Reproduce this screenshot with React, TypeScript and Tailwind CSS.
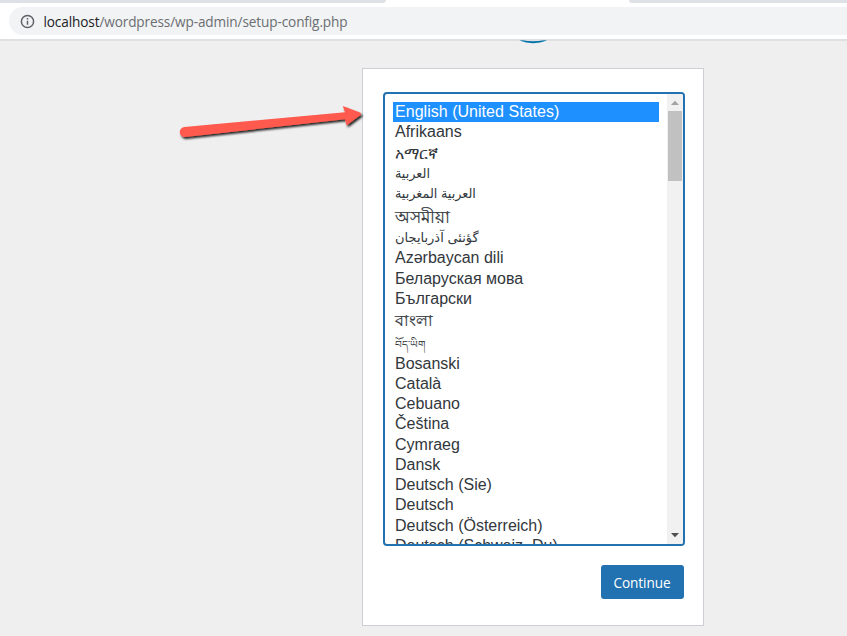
import React from 'react';

type Language = { name: string; row: string; text?: string };

const latin = 'text-[16px]';

const languages: Language[] = [
  { name: 'English (United States)', row: 'h-[20px] bg-[#1e90ff] text-white', text: 'text-[16px] tracking-[0.03px]' },
  { name: 'Afrikaans', row: 'h-[20px]' },
  { name: 'አማርኛ', row: 'h-[24px]', text: 'text-[16px]' },
  { name: 'العربية', row: 'h-[16px]', text: 'text-[12.8px]' },
  { name: 'العربية المغربية', row: 'h-[24px]', text: 'text-[12.8px]' },
  { name: 'অসমীয়া', row: 'h-[22px]', text: 'text-[17.2px] [-webkit-text-stroke:0.2px]' },
  { name: 'گؤنئی آذربایجان', row: 'h-[19px]', text: 'text-[13px]' },
  { name: 'Azərbaycan dili', row: 'h-[21px]' },
  { name: 'Беларуская мова', row: 'h-[21px]' },
  { name: 'Български', row: 'h-[20px]' },
  { name: 'বাংলা', row: 'h-[24px]', text: 'text-[16px] [-webkit-text-stroke:0.2px]' },
  { name: 'བོད་ཡིག', row: 'h-[21px]', text: 'text-[10.5px]' },
  { name: 'Bosanski', row: 'h-[20px]' },
  { name: 'Català', row: 'h-[20px]' },
  { name: 'Cebuano', row: 'h-[20px]' },
  { name: 'Čeština', row: 'h-[20px]' },
  { name: 'Cymraeg', row: 'h-[21px]' },
  { name: 'Dansk', row: 'h-[20px]' },
  { name: 'Deutsch (Sie)', row: 'h-[20px]' },
  { name: 'Deutsch', row: 'h-[20px]' },
  { name: 'Deutsch (Österreich)', row: 'h-[21px]' },
  { name: 'Deutsch (Schweiz, Du)', row: 'h-[20px]' },
];

function BrowserBar() {
  return (
    <header className="h-[41px] shrink-0 border-b-2 border-[#dfe0e1] bg-white">
      <div className="flex h-[3px] justify-between">
        <div className="w-[386px] rounded-br-[3px] bg-[#dee1e6]" />
        <div className="w-[218px] rounded-bl-[3px] bg-[#dee1e6]" />
      </div>
      <div className="mt-[4px] ml-[9px] flex h-[28px] items-center rounded-l-full bg-[#f1f3f4] pl-[11px]">
        <svg className="h-[15px] w-[15px] shrink-0" viewBox="0 0 15 15" fill="none">
          <circle cx="7.5" cy="7.5" r="6.1" stroke="#5f6368" strokeWidth="1.5" />
          <path d="M7.5 6.8v4M7.5 4v1.5" stroke="#5f6368" strokeWidth="1.5" />
        </svg>
        <div className="ml-[8.5px] pt-px font-['Open_Sans','Noto_Sans',sans-serif] text-[13.6px] leading-5 tracking-[-0.12px] whitespace-nowrap text-[#6b6e72]">
          <span className="text-[#202124]">localhost</span>/wordpress/wp-admin/setup-config.php
        </div>
      </div>
    </header>
  );
}

function LanguageList() {
  return (
    <div className="flex h-[454px] overflow-hidden rounded-[4px] border-2 border-[#2271b1] bg-white">
      <ul className="min-w-0 flex-1 overflow-hidden pt-[8px] pr-[8px] pl-[8px] font-['Liberation_Sans','Noto_Sans','DejaVu_Sans',sans-serif] text-[#32373c]">
        {languages.map((l) => (
          <li key={l.name} className={`flex items-center pl-[2px] leading-[20px] whitespace-nowrap ${l.row}`}>
            <span className={l.text ?? latin}>{l.name}</span>
          </li>
        ))}
      </ul>
      <div className="flex w-[16px] flex-col items-center bg-[#f1f1f1]">
        <svg className="h-[17px] w-[16px] shrink-0" viewBox="0 0 16 17">
          <path d="M4 11 8 6.8 12 11z" fill="#a3a3a3" />
        </svg>
        <div className="h-[70px] w-[14px] bg-[#c1c1c1]" />
        <div className="flex-1" />
        <svg className="h-[17px] w-[16px] shrink-0" viewBox="0 0 16 17">
          <path d="M4 6 8 10.2 12 6z" fill="#505050" />
        </svg>
      </div>
    </div>
  );
}

export default function App() {
  return (
    <div className="relative flex h-[636px] w-[847px] flex-col overflow-hidden bg-[#efefef]">
      <BrowserBar />
      <svg className="absolute top-[40px] left-[515px] h-[5px] w-[36px]" viewBox="0 0 36 5">
        <path d="M4.500 0.500Q18 5.800 32 0.500L29 0.300Q18 2 7.500 0.300z" fill="#0073aa" />
      </svg>
      <main className="mt-[27px] ml-[362px] flex h-[558px] w-[342px] flex-col border border-[#ccd0d4] bg-white pt-[23px] pr-[18px] pl-[20px]">
        <LanguageList />
        <button className="mt-[19px] mr-[1.5px] h-[34px] w-[83px] self-end rounded-[3px] bg-[#2271b1] pt-[2px] font-['Open_Sans','Noto_Sans',sans-serif] text-[13.6px] tracking-[-0.1px] text-white">
          Continue
        </button>
      </main>
      <svg className="absolute top-[90px] left-[170px] h-[60px] w-[210px]" viewBox="0 0 210 60">
        <defs>
          <filter id="arrow-shadow" x="-10%" y="-30%" width="120%" height="170%">
            <feDropShadow dx="1.5" dy="2" stdDeviation="1.2" floodColor="#000" floodOpacity="0.85" />
          </filter>
        </defs>
        <path
          d="M14.5 37 175 22.2 172.8 16 190 22.6Q192 24 190 25.5L176.5 35.5 175 29.2 15 47A5 5 0 0 1 14.5 37z"
          fill="#ff5a4d"
          filter="url(#arrow-shadow)"
        />
      </svg>
    </div>
  );
}
